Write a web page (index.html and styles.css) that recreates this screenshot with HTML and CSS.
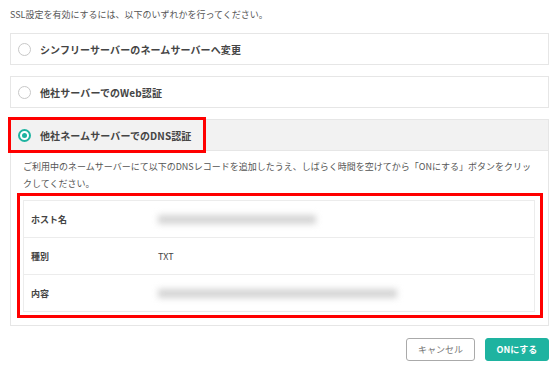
FILE: index.html
```html
<!DOCTYPE html>
<html lang="ja">
<head>
  <meta charset="UTF-8">
  <title>SSL設定</title>
  <link rel="stylesheet" href="styles.css">
</head>
<body>

  <p class="intro">SSL設定を有効にするには、以下のいずれかを行ってください。</p>

  <div class="option">
    <div class="option-head">
      <span class="radio"></span>
      <span class="option-title">シンフリーサーバーのネームサーバーへ変更</span>
    </div>
  </div>

  <div class="option">
    <div class="option-head">
      <span class="radio"></span>
      <span class="option-title">他社サーバーでのWeb認証</span>
    </div>
  </div>

  <div class="option selected">
    <div class="option-head">
      <div class="mark">
        <span class="radio checked"></span>
        <span class="option-title">他社ネームサーバーでのDNS認証</span>
      </div>
    </div>
    <div class="option-body">
      <p class="note">ご利用中のネームサーバーにて以下のDNSレコードを追加したうえ、しばらく時間を空けてから「ONにする」ボタンをクリックしてください。</p>
      <div class="record-mark">
        <div class="record">
          <div class="row">
            <span class="key">ホスト名</span>
            <span><span class="blur host"></span></span>
          </div>
          <div class="row">
            <span class="key">種別</span>
            <span>TXT</span>
          </div>
          <div class="row">
            <span class="key">内容</span>
            <span><span class="blur value"></span></span>
          </div>
        </div>
      </div>
    </div>
  </div>

  <div class="actions">
    <button class="btn cancel">キャンセル</button>
    <button class="btn primary">ONにする</button>
  </div>

</body>
</html>
```

FILE: styles.css
```css
body {
  margin: 0;
  padding: 6px 11px 0 10px;
  font-family: "Noto Sans CJK JP", "Noto Sans", sans-serif;
  color: #555;
  background: #fff;
}
.intro {
  margin: 0 0 10px;
  font-size: 9px;
  line-height: 17px;
}
.option {
  border: 1px solid #e6e6e6;
  margin-bottom: 11px;
}
.option-head {
  display: flex;
  align-items: center;
  height: 30px;
}
.option.selected .option-head {
  background: #f2f2f2;
  border-bottom: 1px solid #e6e6e6;
}
.mark {
  display: flex;
  align-items: center;
  height: 30px;
  width: 192px;
  outline: 3px solid #f00;
}
.radio {
  box-sizing: border-box;
  width: 13px;
  height: 13px;
  margin: 0 9px 0 7px;
  border: 1px solid #c8c8c8;
  border-radius: 50%;
  background: #fff;
  flex-shrink: 0;
}
.radio.checked {
  border: 2px solid #1eb3a0;
  display: flex;
  align-items: center;
  justify-content: center;
}
.radio.checked::after {
  content: "";
  width: 5px;
  height: 5px;
  border-radius: 50%;
  background: #1eb3a0;
}
.option-title {
  font-size: 10px;
  font-weight: bold;
  color: #444;
  letter-spacing: 0.1px;
}
.option-body {
  padding: 7px 5px 7px 6px;
}
.note {
  margin: 0 6px 1px;
  font-size: 9px;
  line-height: 17px;
}
.record-mark {
  border: 3px solid #f00;
  padding: 4px 5px 3px 3px;
}
.record {
  border: 1px solid #ececec;
  font-size: 9px;
  color: #444;
}
.row {
  display: flex;
  align-items: center;
  height: 36px;
}
.row + .row {
  border-top: 1px solid #ececec;
}
.key {
  width: 127px;
  padding-left: 7px;
  font-weight: bold;
}
.blur {
  display: block;
  height: 9px;
  background: #d4d4d4;
  filter: blur(3px);
}
.blur.host {
  width: 158px;
}
.blur.value {
  width: 239px;
}
.actions {
  display: flex;
  justify-content: flex-end;
  gap: 10px;
  margin-top: 12px;
}
.btn {
  height: 23px;
  border-radius: 3px;
  font-family: inherit;
  font-size: 9px;
  cursor: pointer;
}
.cancel {
  width: 69px;
  border: 1px solid #aaa;
  background: #fff;
  color: #777;
}
.primary {
  width: 64px;
  border: 1px solid #1eb3a0;
  background: #1eb3a0;
  color: #fff;
  font-weight: bold;
}
```
